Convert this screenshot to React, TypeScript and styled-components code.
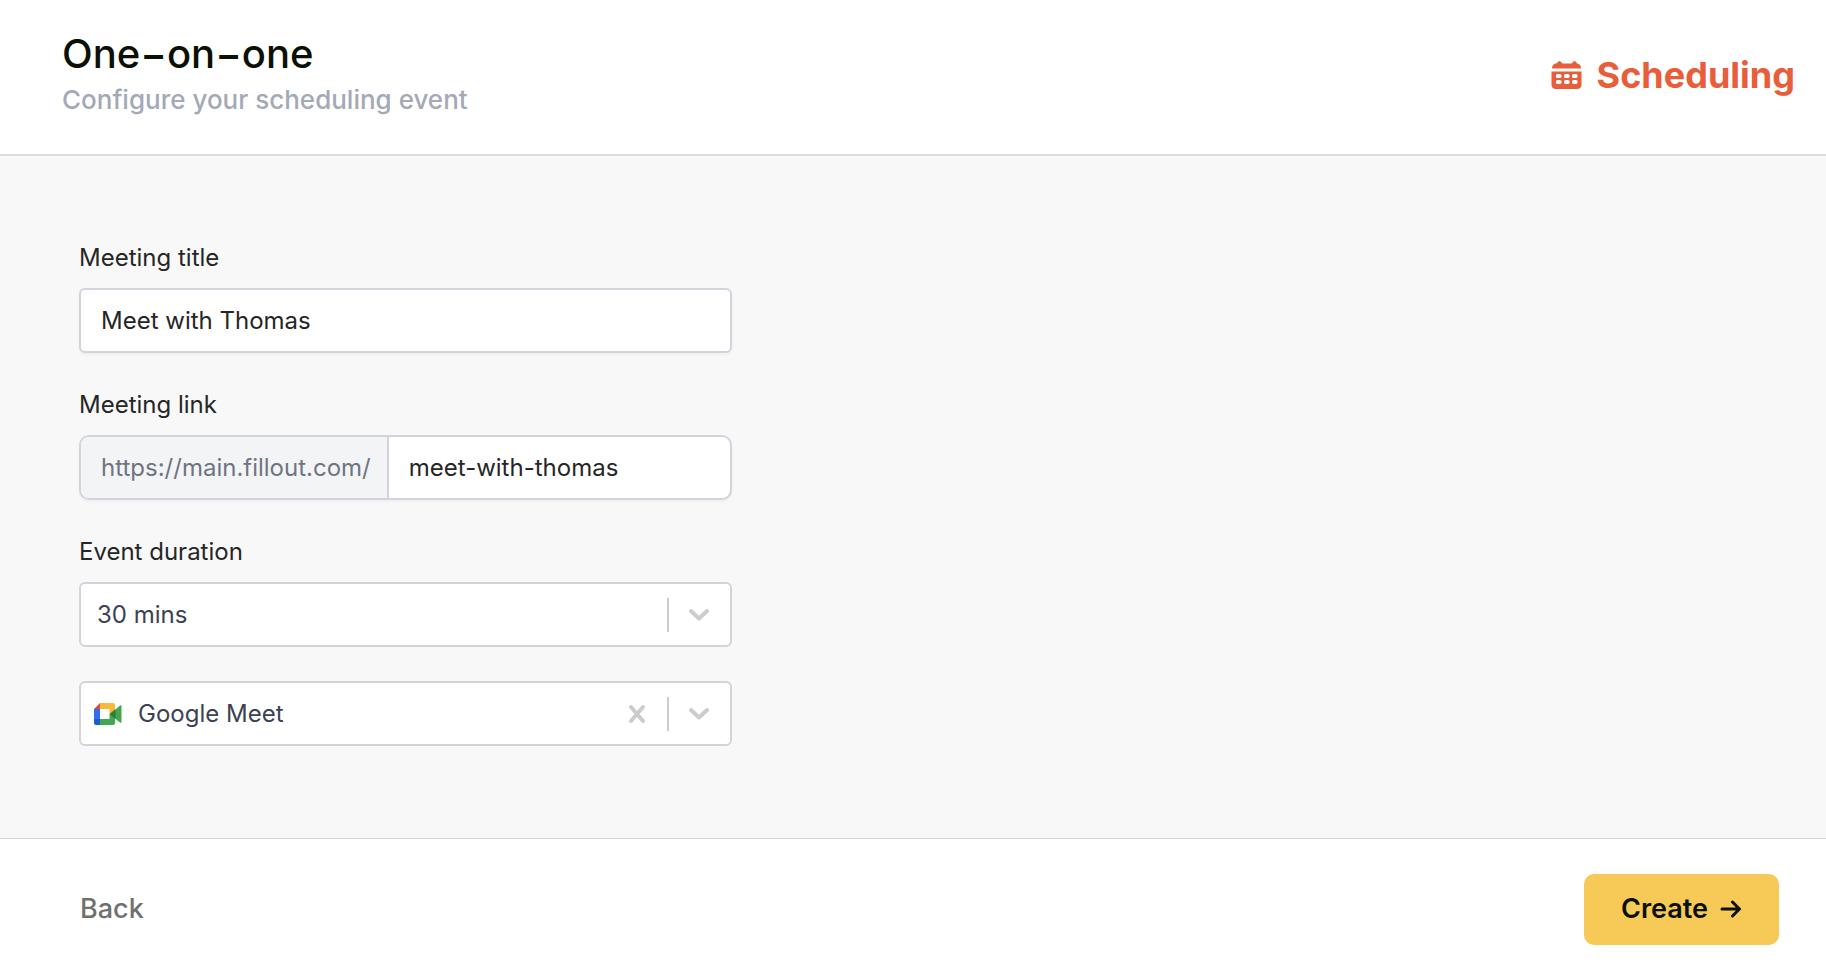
import React, { useState } from "react";
import styled, { createGlobalStyle, css } from "styled-components";

const GlobalStyle = createGlobalStyle`
  * { box-sizing: border-box; }
  body { margin: 0; background: #ffffff; }
  body, button, input, select { font-family: Inter, "Liberation Sans", sans-serif; }
`;

const Page = styled.form`
  min-height: 100vh;
  display: flex;
  flex-direction: column;
  background: #ffffff;
`;

const Header = styled.header`
  display: flex;
  align-items: center;
  justify-content: space-between;
  padding: 30px 31px 32px 62px;
  border-bottom: 2px solid #dcdcdc;
`;

const Title = styled.h1`
  margin: 0;
  font-size: 40px;
  line-height: 48px;
  font-weight: 500;
  color: #0b1005;
`;

const Subtitle = styled.p`
  margin: 0;
  font-size: 26px;
  line-height: 44px;
  font-weight: 500;
  color: #a3a9b6;
`;

const Brand = styled.div`
  display: flex;
  align-items: center;
  gap: 14px;
  padding-bottom: 2px;
  font-size: 36px;
  line-height: 44px;
  font-weight: 700;
  color: #e85d3a;
`;

const Main = styled.main`
  flex: 1;
  padding: 84px 79px;
  background: #f8f8f8;
`;

const Fields = styled.div`
  display: flex;
  flex-direction: column;
  gap: 34px;
  max-width: 653px;
`;

const Field = styled.div`
  display: flex;
  flex-direction: column;
  gap: 12px;
`;

const Label = styled.label`
  font-size: 24px;
  line-height: 36px;
  color: #262626;
`;

const Control = styled.div<{ $radius?: number; $raised?: boolean }>`
  display: flex;
  align-items: center;
  height: 65px;
  overflow: hidden;
  border: 2px solid #d2d4dc;
  border-radius: ${(p) => p.$radius ?? 6}px;
  background: #ffffff;
  ${(p) => p.$raised && css`box-shadow: 0 2px 3px rgba(0, 0, 0, 0.04);`}
`;

const fieldText = css`
  flex: 1;
  min-width: 0;
  height: 100%;
  margin: 0;
  border: 0;
  outline: 0;
  background: transparent;
  font-size: 24px;
`;

const TextInput = styled.input`
  ${fieldText}
  padding: 0 20px;
  color: #262626;
`;

const Prefix = styled.span`
  display: flex;
  align-items: center;
  height: 100%;
  padding: 0 16px 0 20px;
  border-right: 2px solid #d2d4dc;
  background: #f3f4f6;
  font-size: 24px;
  color: #6f7482;
`;

const Select = styled.select`
  ${fieldText}
  appearance: none;
  padding: 0 16px;
  color: #3b4252;
`;

const MeetIcon = styled.svg`
  flex: none;
  margin-left: 13px;
`;

const ClearButton = styled.button`
  display: grid;
  place-items: center;
  width: 60px;
  height: 100%;
  padding: 0;
  border: 0;
  background: transparent;
  color: #cccccc;
  cursor: pointer;
`;

const Indicator = styled.span`
  display: grid;
  place-items: center;
  width: 63px;
  height: 34px;
  border-left: 2px solid #cccccc;
  color: #cccccc;
`;

const Footer = styled.footer`
  display: flex;
  align-items: center;
  justify-content: space-between;
  padding: 35px 47px 31px 80px;
  border-top: 1px solid #d2d4d8;
`;

const FooterButton = styled.button<{ $primary?: boolean }>`
  display: flex;
  align-items: center;
  justify-content: center;
  gap: 12px;
  height: 71px;
  min-width: ${(p) => (p.$primary ? "195px" : "0")};
  padding: 0 0 2px;
  border: 0;
  border-radius: 10px;
  background: ${(p) => (p.$primary ? "#f7c957" : "transparent")};
  color: ${(p) => (p.$primary ? "#0b1005" : "#6f716c")};
  font-size: 27px;
  font-weight: ${(p) => (p.$primary ? 600 : 500)};
  cursor: pointer;
`;

function CalendarIcon() {
  const holes = [14, 20].flatMap((y) => [5, 13, 21].map((x) => ({ x, y })));
  return (
    <svg width="32" height="30" viewBox="0 0 32 30" fill="currentColor" aria-hidden="true">
      <path d="M1 8.500Q1 4 5 3.500L6.500 2.500Q8.500-.5 10.500 2.500L11.500 3.500H20.500L21.500 2.500Q23.500-.5 25.500 2.500L26 3.500Q30 4 30 8.500Z" />
      <path d="M0.500 11.500H30.500V24.600Q30.500 29 26 29H5Q0.500 29 0.500 24.600Z" />
      {holes.map((h) => (
        <rect key={`${h.x}-${h.y}`} x={h.x} y={h.y} width="5.500" height="4" rx="1.600" fill="#ffffff" />
      ))}
    </svg>
  );
}

function Chevron() {
  return (
    <Indicator>
      <svg width="22" height="14" viewBox="0 0 22 14" fill="none" stroke="currentColor" strokeWidth="4" strokeLinecap="round" strokeLinejoin="round" aria-hidden="true">
        <path d="M2 3l8 7.500L18 3" />
      </svg>
    </Indicator>
  );
}

export default function App() {
  const [title, setTitle] = useState("Meet with Thomas");
  const [slug, setSlug] = useState("meet-with-thomas");
  const [duration, setDuration] = useState("30 mins");
  const [place, setPlace] = useState("Google Meet");

  return (
    <>
      <GlobalStyle />
      <Page onSubmit={(e) => e.preventDefault()}>
        <Header>
          <div>
            <Title>One−on−one</Title>
            <Subtitle>Configure your scheduling event</Subtitle>
          </div>
          <Brand>
            <CalendarIcon />
            Scheduling
          </Brand>
        </Header>
        <Main>
          <Fields>
            <Field>
              <Label htmlFor="title">Meeting title</Label>
              <Control $raised>
                <TextInput id="title" value={title} onChange={(e) => setTitle(e.target.value)} />
              </Control>
            </Field>
            <Field>
              <Label htmlFor="slug">Meeting link</Label>
              <Control $radius={10} $raised>
                <Prefix>https://main.fillout.com/</Prefix>
                <TextInput id="slug" value={slug} onChange={(e) => setSlug(e.target.value)} />
              </Control>
            </Field>
            <Field>
              <Label htmlFor="duration">Event duration</Label>
              <Control>
                <Select id="duration" value={duration} onChange={(e) => setDuration(e.target.value)}>
                  <option>30 mins</option>
                </Select>
                <Chevron />
              </Control>
            </Field>
            <Control>
              <MeetIcon width="28" height="22" viewBox="0 0 28 22" aria-hidden="true">
                <path d="M0 6H6V16H0Z" fill="#2f6fed" />
                <path d="M0 16H6V22H2Q0 22 0 20Z" fill="#1f5bd0" />
                <path d="M0 6L6 0V6Z" fill="#e04a3c" />
                <path d="M6 0H19Q21 0 21 2V8L15.500 11V6H6Z" fill="#f7b93c" />
                <path d="M6 16H15.500V11L21 14V20Q21 22 19 22H6Z" fill="#45a652" />
                <path d="M21 7L26 2.500Q27.500 1.800 27.500 3V19Q27.500 20.400 26 19.500L21 15.500Z" fill="#45a652" />
                <path d="M15.500 11L21.500 6V16Z" fill="#2c7d38" />
              </MeetIcon>
              <Select aria-label="Meeting location" value={place} onChange={(e) => setPlace(e.target.value)}>
                <option>Google Meet</option>
                <option value="" />
              </Select>
              <ClearButton type="button" aria-label="Clear location" onClick={() => setPlace("")}>
                <svg width="18" height="20" viewBox="0 0 18 20" fill="none" stroke="currentColor" strokeWidth="4" strokeLinecap="round" aria-hidden="true">
                  <path d="M3 3l12 14M15 3L3 17" />
                </svg>
              </ClearButton>
              <Chevron />
            </Control>
          </Fields>
        </Main>
        <Footer>
          <FooterButton type="button">Back</FooterButton>
          <FooterButton type="submit" $primary>
            Create
            <svg width="22" height="18" viewBox="0 0 22 18" fill="none" stroke="currentColor" strokeWidth="3" strokeLinecap="round" strokeLinejoin="round" aria-hidden="true">
              <path d="M2 9H19M12.500 2L19.500 9L12.500 16" />
            </svg>
          </FooterButton>
        </Footer>
      </Page>
    </>
  );
}
